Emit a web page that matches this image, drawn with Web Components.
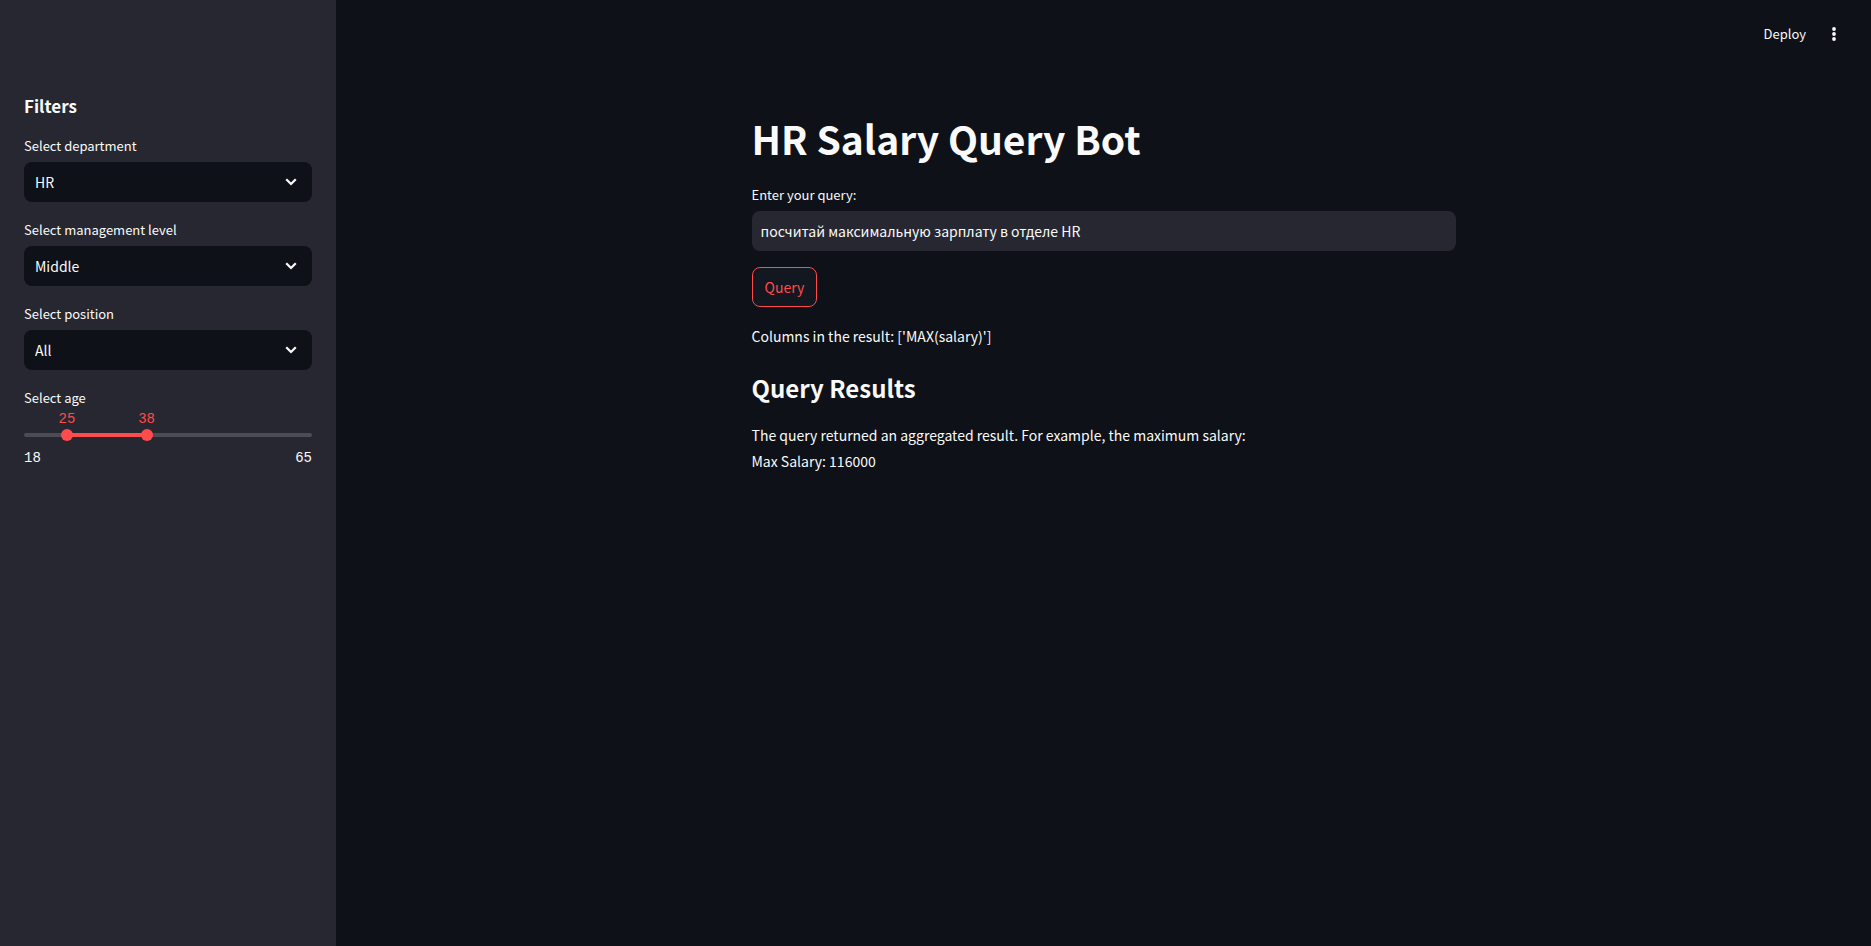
<!DOCTYPE html>
<html lang="en">
<head>
<meta charset="utf-8">
<title>HR Salary Query Bot</title>
<style>
  html { color-scheme: dark; }
  body {
    margin: 0;
    background: #0e1117;
    color: #fafafa;
    font: 14px/26px "Noto Sans CJK SC", "Noto Sans", sans-serif;
  }
</style>
</head>
<body>
<hr-app></hr-app>
<script>
  function define(name, html, setup) {
    const template = document.createElement('template');
    template.innerHTML = '<style>*{box-sizing:border-box}[hidden]{display:none}</style>' + html;
    customElements.define(name, class extends HTMLElement {
      constructor() {
        super();
        this.attachShadow({ mode: 'open' }).append(template.content.cloneNode(true));
      }
      connectedCallback() {
        if (setup) setup(this, this.shadowRoot);
      }
    });
  }

  define('select-field', `
    <style>
      :host { display: block; }
      label { display: block; font-size: 13px; line-height: 20px; margin-bottom: 6px; }
      .box { display: grid; align-items: center; }
      .box > * { grid-area: 1 / 1; }
      select {
        appearance: none; width: 100%; height: 40px; margin: 0; padding: 0 40px 0 11px;
        border: 0; border-radius: 8px; background: #0e1117; color: inherit;
        font: inherit; cursor: pointer;
      }
      svg { justify-self: end; margin-right: 12px; width: 18px; height: 18px; pointer-events: none; }
    </style>
    <label for="field"></label>
    <div class="box">
      <select id="field"><option></option></select>
      <svg viewBox="0 0 18 18" fill="none" stroke="#fafafa" stroke-width="2.2" aria-hidden="true">
        <path d="M5 7 9 11 13 7" stroke-linecap="square" stroke-linejoin="miter"/>
      </svg>
    </div>`, (host, root) => {
      root.querySelector('label').textContent = host.getAttribute('label');
      root.querySelector('option').textContent = host.getAttribute('value');
    });

  define('range-field', `
    <style>
      :host { display: block; }
      fieldset { border: 0; margin: 0; padding: 0; min-width: 0; }
      legend { padding: 0; font-size: 13px; line-height: 20px; }
      .values, .limits { font: 14px/22px "Liberation Mono", monospace; }
      .values { position: relative; height: 21px; color: #ff4b4b; }
      output { position: absolute; transform: translateX(-50%); }
      .track { display: grid; align-items: center; height: 12px; }
      .track > * { grid-area: 1 / 1; }
      .rail { height: 4px; border-radius: 2px; }
      input {
        appearance: none; width: calc(100% + 12px); height: 12px; margin: 0 -6px;
        background: none; pointer-events: none;
      }
      input::-webkit-slider-thumb {
        appearance: none; width: 12px; height: 12px; border-radius: 50%;
        background: #ff4b4b; pointer-events: auto; cursor: pointer;
      }
      .limits { display: flex; justify-content: space-between; margin-top: 6px; }
    </style>
    <fieldset>
      <legend></legend>
      <div class="values"><output for="low"></output><output for="high"></output></div>
      <div class="track">
        <div class="rail"></div>
        <input type="range" id="low" aria-label="Minimum age">
        <input type="range" id="high" aria-label="Maximum age">
      </div>
      <div class="limits"><span></span><span></span></div>
    </fieldset>`, (host, root) => {
      const min = +host.getAttribute('min'), max = +host.getAttribute('max');
      const inputs = [...root.querySelectorAll('input')];
      const outputs = root.querySelectorAll('output');
      const limits = root.querySelectorAll('.limits span');
      root.querySelector('legend').textContent = host.getAttribute('label');
      limits[0].textContent = min;
      limits[1].textContent = max;
      inputs.forEach((input, i) => {
        input.min = min;
        input.max = max;
        input.value = host.getAttribute(i ? 'high' : 'low');
        input.addEventListener('input', update);
      });
      function update() {
        const stops = inputs.map(input => (input.value - min) / (max - min) * 100 + '%');
        outputs.forEach((output, i) => {
          output.textContent = inputs[i].value;
          output.style.left = stops[i];
        });
        root.querySelector('.rail').style.background =
          `linear-gradient(to right, #4c4c57 ${stops[0]}, #ff4b4b ${stops[0]} ${stops[1]}, #4c4c57 ${stops[1]})`;
      }
      update();
    });

  define('filter-sidebar', `
    <style>
      :host { display: block; background: #262730; padding: 92px 24px 24px; }
      h2 { margin: 0 0 16px; font-size: 17px; line-height: 28px; font-weight: 700; }
      .fields { display: grid; gap: 18px; }
    </style>
    <h2>Filters</h2>
    <div class="fields"><slot></slot></div>`);

  define('app-toolbar', `
    <style>
      :host { display: flex; justify-content: flex-end; align-items: center; gap: 16px; height: 68px; padding-right: 25px; }
      button { border: 0; margin: 0; padding: 0; background: none; color: inherit; font: inherit; font-size: 13px; line-height: 24px; cursor: pointer; }
      .menu { display: grid; place-items: center; width: 24px; height: 24px; }
    </style>
    <button type="button">Deploy</button>
    <button type="button" class="menu" aria-label="Main menu">
      <svg width="16" height="16" viewBox="0 0 16 16" fill="#fafafa" aria-hidden="true">
        <circle cx="8" cy="3" r="1.9"/><circle cx="8" cy="8" r="1.9"/><circle cx="8" cy="13" r="1.9"/>
      </svg>
    </button>`);

  define('query-form', `
    <style>
      :host { display: block; }
      label { display: block; font-size: 13px; line-height: 22px; margin-bottom: 5px; }
      input {
        display: block; width: 100%; height: 40px; margin: 0 0 16px; padding: 0 9px;
        border: 0; border-radius: 8px; background: #262730; color: inherit; font: inherit;
      }
      button {
        display: block; height: 40px; margin: 0; padding: 0 12px; border: 1px solid #ff4b4b;
        border-radius: 8px; background: #131720; color: #ff4b4b; font: inherit; cursor: pointer;
      }
    </style>
    <form onsubmit="return false">
      <label for="query">Enter your query:</label>
      <input type="text" id="query" value="посчитай максимальную зарплату в отделе HR">
      <button type="submit">Query</button>
    </form>`);

  define('query-results', `
    <style>
      :host { display: block; }
      p { margin: 0; }
      h2 { margin: 21px 0 16px; font-size: 24px; line-height: 36px; font-weight: 700; }
    </style>
    <p>Columns in the result: ['MAX(salary)']</p>
    <h2>Query Results</h2>
    <p>The query returned an aggregated result. For example, the maximum salary:</p>
    <p>Max Salary: 116000</p>`);

  define('hr-app', `
    <style>
      :host { display: grid; grid-template-columns: 336px 1fr; min-height: 100vh; }
      main { max-width: 704px; margin: 0 auto; padding: 44px 0 40px; }
      h1 { margin: 0 0 20px; font-size: 39px; line-height: 52px; font-weight: 700; }
      query-results { margin-top: 16px; }
    </style>
    <filter-sidebar>
      <select-field label="Select department" value="HR"></select-field>
      <select-field label="Select management level" value="Middle"></select-field>
      <select-field label="Select position" value="All"></select-field>
      <range-field label="Select age" min="18" max="65" low="25" high="38"></range-field>
    </filter-sidebar>
    <div>
      <app-toolbar></app-toolbar>
      <main>
        <h1>HR Salary Query Bot</h1>
        <query-form></query-form>
        <query-results></query-results>
      </main>
    </div>`);
</script>
</body>
</html>
